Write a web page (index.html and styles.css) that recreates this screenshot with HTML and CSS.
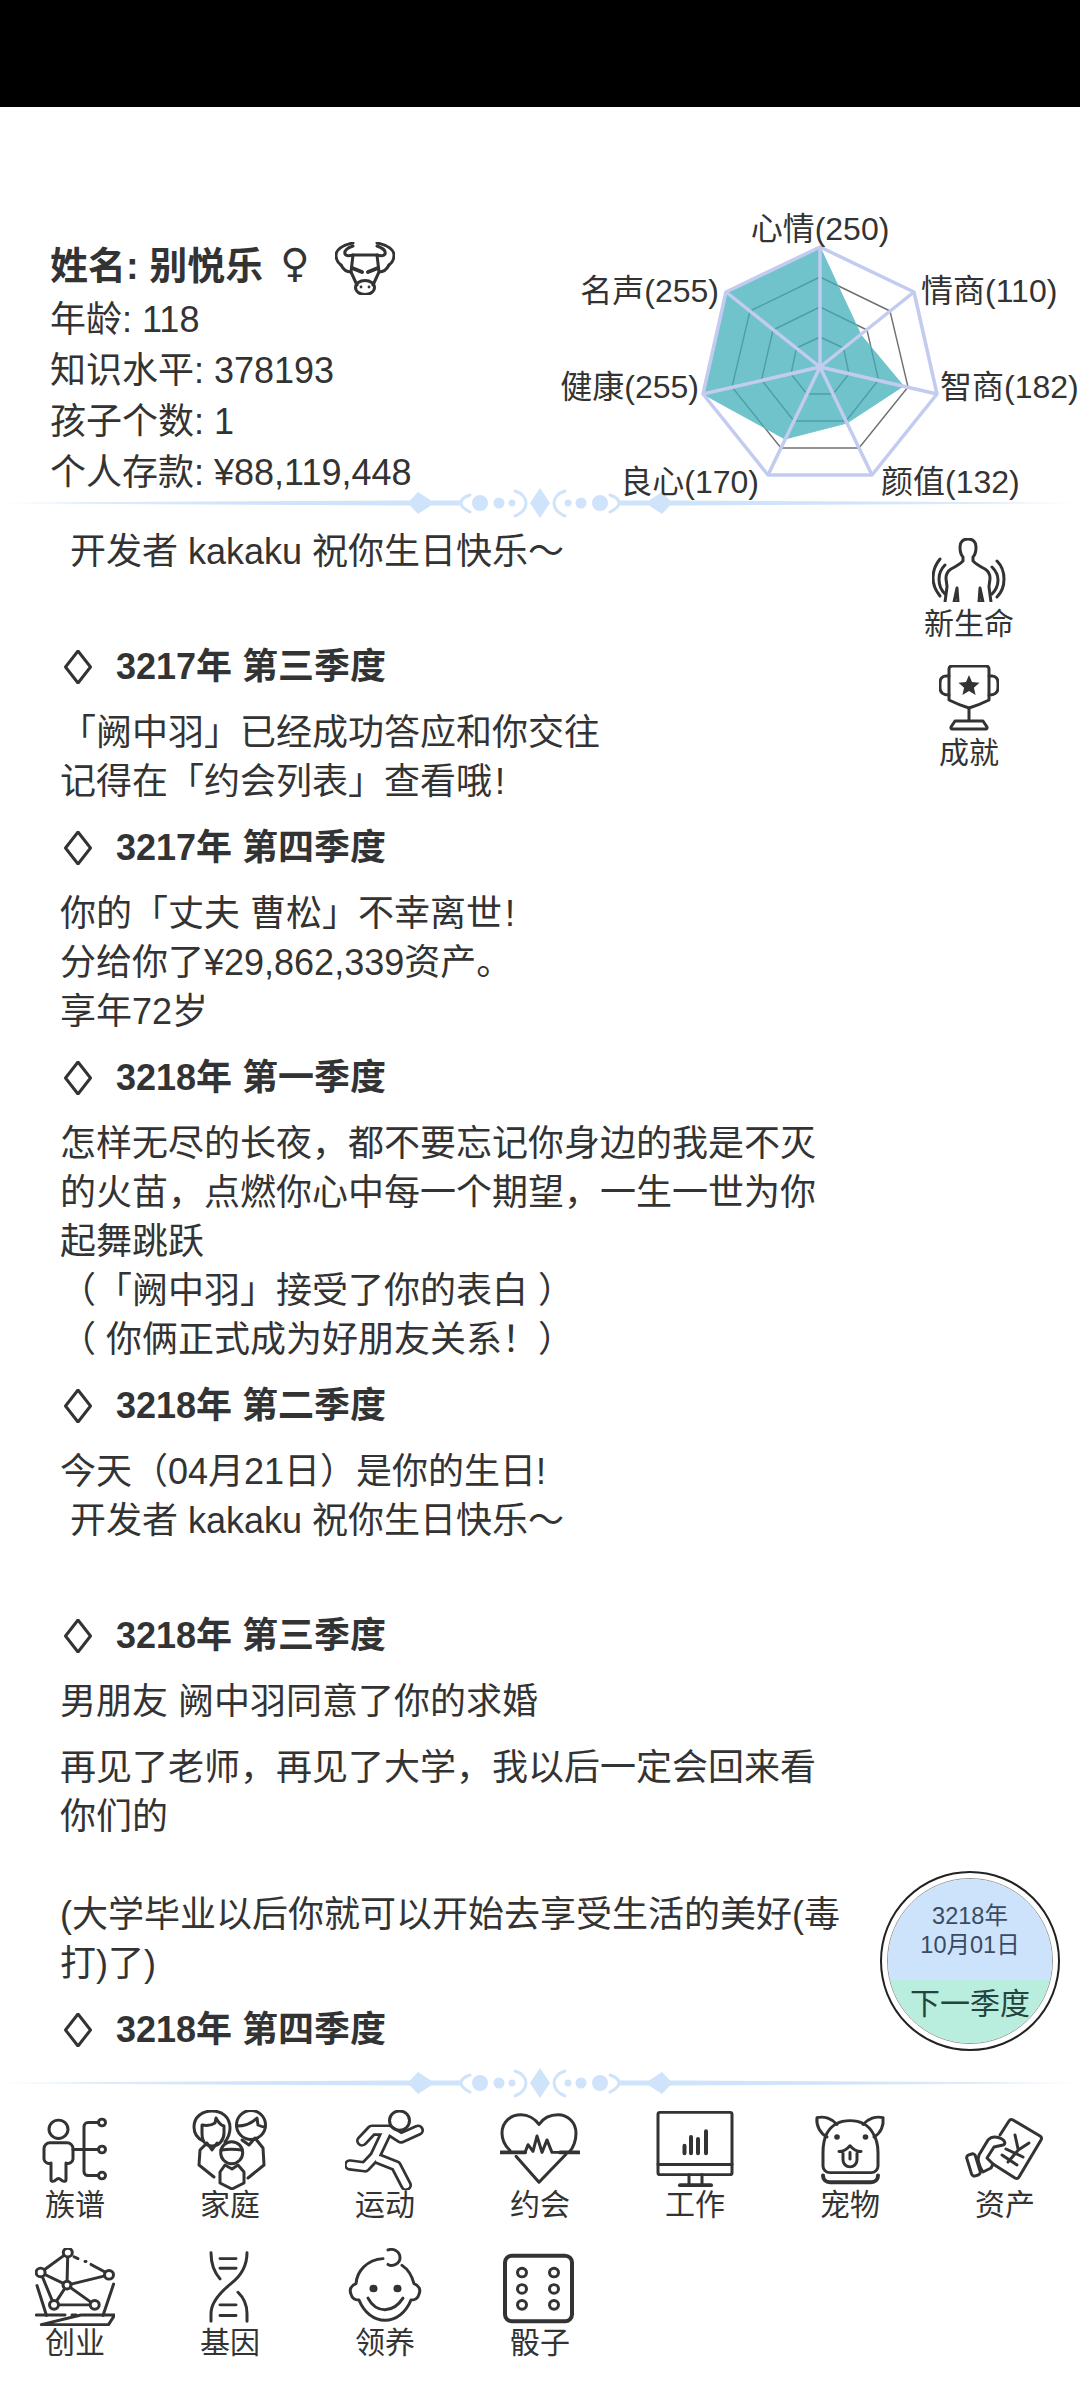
FILE: index.html
```html
<!DOCTYPE html>
<html lang="zh-CN">
<head>
    <meta charset="UTF-8">
    <meta name="viewport" content="width=device-width, initial-scale=1.0">
    <title>人生模拟器</title>
    <link rel="stylesheet" href="styles.css">
</head>
<body>

    <div class="status-bar"></div>

    <div class="header">
        <div class="info">
            <div class="info-name">
                <span>姓名: 别悦乐</span>
                <span class="gender">♀</span>
                <svg class="zodiac" viewBox="0 0 60 53">
                    <path d="M18 1C7 3 1 8 1 13c0 5 2 8 5 10M42 1c11 2 17 7 17 12 0 5-2 8-5 10"/>
                    <path d="M18 4c-6 2-9 5-8 8 1 2 4 2 8 1h24c4 1 7 1 8-1 1-3-2-6-8-8"/>
                    <path d="M6 23c2 4 5 7 10 7M54 23c-2 4-5 7-10 7"/>
                    <path d="M18 13l-2 17 6 13M42 13l2 17-6 13"/>
                    <path class="brow" d="M17 26l10 4M43 26l-10 4"/>
                    <ellipse cx="30" cy="45.500" rx="9.500" ry="7"/>
                    <circle class="solid" cx="26" cy="45" r="1.400"/>
                    <circle class="solid" cx="34" cy="45" r="1.400"/>
                </svg>
            </div>
            <div class="info-line">年龄: 118</div>
            <div class="info-line">知识水平: 378193</div>
            <div class="info-line">孩子个数: 1</div>
            <div class="info-line">个人存款: ¥88,119,448</div>
        </div>

        <svg class="radar" viewBox="540 190 540 310">
            <g class="radar-rings">
                <polygon points="820,337 843.500,348 849,374 833,394 807,394 791,374 796.500,348"/>
                <polygon points="820,307 867,330 878.500,380 846,421 794,421 761.500,380 773,330"/>
                <polygon points="820,277 890,311 908,387 859,448 781,448 732,387 750,311"/>
            </g>
            <polygon class="radar-data" points="820,247 861,335 903.500,386 847,423 785,439 703,394 726,292"/>
            <g class="radar-spokes">
                <line x1="820" y1="367" x2="820" y2="247"/>
                <line x1="820" y1="367" x2="914" y2="292"/>
                <line x1="820" y1="367" x2="937" y2="394"/>
                <line x1="820" y1="367" x2="872" y2="475"/>
                <line x1="820" y1="367" x2="768" y2="475"/>
                <line x1="820" y1="367" x2="703" y2="394"/>
                <line x1="820" y1="367" x2="726" y2="292"/>
            </g>
            <polygon class="radar-outer" points="820,247 914,292 937,394 872,475 768,475 703,394 726,292"/>
            <g class="radar-labels">
                <text x="820" y="240" text-anchor="middle">心情(250)</text>
                <text x="921" y="302">情商(110)</text>
                <text x="940" y="398">智商(182)</text>
                <text x="881" y="493">颜值(132)</text>
                <text x="759" y="493" text-anchor="end">良心(170)</text>
                <text x="699" y="398" text-anchor="end">健康(255)</text>
                <text x="719" y="302" text-anchor="end">名声(255)</text>
            </g>
        </svg>
    </div>

    <svg class="divider" viewBox="0 0 1080 32">
        <defs>
            <linearGradient id="fade" gradientUnits="userSpaceOnUse" x1="8" x2="400" y1="0" y2="0">
                <stop offset="0" stop-color="#cfe3fb" stop-opacity="0.1"/>
                <stop offset="0.2" stop-color="#cfe3fb" stop-opacity="0.65"/>
                <stop offset="0.6" stop-color="#cfe3fb"/>
            </linearGradient>
            <symbol id="dividerHalf" viewBox="0 0 540 32" width="540" height="32">
                <polygon points="8,15.500 400,13.500 400,18.500 8,16.500" fill="url(#fade)"/>
                <polygon points="400,13.500 410,13.500 418,5 431,13.500 460,13.500 460,18.500 431,18.500 418,27 410,18.500 400,18.500" fill="#cfe3fb"/>
                <path d="M470 8C464 10 461 13 461 16s3 6 9 9M515 4c7 2 11 7 11 12s-4 10-11 13" fill="none" stroke="#cfe3fb" stroke-width="3"/>
                <circle cx="480" cy="16" r="8" fill="#cfe3fb"/>
                <circle cx="499" cy="16" r="5.500" fill="#cfe3fb"/>
                <circle cx="512" cy="16" r="3.500" fill="#cfe3fb"/>
                <polygon points="530,16 540,1 540,31" fill="#cfe3fb"/>
            </symbol>
        </defs>
        <use href="#dividerHalf" x="0" y="0"/>
        <use href="#dividerHalf" transform="translate(1080 0) scale(-1 1)"/>
    </svg>

    <div class="main">
        <div class="log">
            <div class="log-inner">
                <p>今天（04月21日）是你的生日!<br>&nbsp;开发者 kakaku 祝你生日快乐～<br><br></p>

                <h3><svg class="bullet" viewBox="0 0 28 34"><path d="M14 1L26.500 17 14 33 1.500 17z"/></svg>3217年 第三季度</h3>
                <p>「阙中羽」已经成功答应和你交往<br>记得在「约会列表」查看哦&#8202;!</p>

                <h3><svg class="bullet" viewBox="0 0 28 34"><path d="M14 1L26.500 17 14 33 1.500 17z"/></svg>3217年 第四季度</h3>
                <p>你的「丈夫 曹松」不幸离世&#8202;!<br>分给你了¥29,862,339资产。<br>享年72岁</p>

                <h3><svg class="bullet" viewBox="0 0 28 34"><path d="M14 1L26.500 17 14 33 1.500 17z"/></svg>3218年 第一季度</h3>
                <p>怎样无尽的长夜，都不要忘记你身边的我是不灭的火苗，点燃你心中每一个期望，一生一世为你起舞跳跃<br>（「阙中羽」接受了你的表白 ）<br>（ 你俩正式成为好朋友关系！）</p>

                <h3><svg class="bullet" viewBox="0 0 28 34"><path d="M14 1L26.500 17 14 33 1.500 17z"/></svg>3218年 第二季度</h3>
                <p>今天（04月21日）是你的生日!<br>&nbsp;开发者 kakaku 祝你生日快乐～<br><br></p>

                <h3><svg class="bullet" viewBox="0 0 28 34"><path d="M14 1L26.500 17 14 33 1.500 17z"/></svg>3218年 第三季度</h3>
                <p>男朋友 阙中羽同意了你的求婚</p>
                <p>再见了老师，再见了大学，我以后一定会回来看你们的<br><br>(大学毕业以后你就可以开始去享受生活的美好(毒打)了)</p>

                <h3><svg class="bullet" viewBox="0 0 28 34"><path d="M14 1L26.500 17 14 33 1.500 17z"/></svg>3218年 第四季度</h3>
            </div>
        </div>

        <div class="side">
            <div class="side-item">
                <svg class="side-icon" width="74" height="64" viewBox="0 0 74 64">
                    <path d="M36 1c-5 0-8 3-8 8 0 4 1 8 3 10v4c-3 3-8 6-12 8-3 2-5 5-5 9 0 3 1 6 1 9l-2 15M36 1c5 0 8 3 8 8 0 4-1 8-3 10v4c3 3 8 6 12 8 3 2 5 5 5 9 0 3-1 6-1 9l2 15"/>
                    <path d="M25 50l-3 14h4zM48 50l3 14h-4z"/>
                    <path d="M8 21C3 27 1 33 1 40s3 13 7 18M13 27c-4 4-6 9-6 14s2 11 6 15M65 23c5 5 7 11 7 18s-2 13-7 18M60 29c4 4 6 8 6 13s-2 10-6 14"/>
                </svg>
                <span>新生命</span>
            </div>
            <div class="side-item side-trophy">
                <svg class="side-icon" width="60" height="66" viewBox="0 0 60 66">
                    <path d="M13 1h34a3 3 0 0 1 3 3v31c-6 3-13 6-20 8-7-2-14-5-20-8V4a3 3 0 0 1 3-3z"/>
                    <path d="M10 11H7c-4 0-6 3-6 7v5c0 4 3 7 9 7M50 11h3c4 0 6 3 6 7v5c0 4-3 7-9 7"/>
                    <path d="M30 43v13M16 56h28l4 6a1.500 1.500 0 0 1-1 2H13a1.500 1.500 0 0 1-1-2z"/>
                    <path class="solid" d="M30 10l3 7 7.500 .7-5.600 5 1.700 7.300L30 26l-6.600 4 1.700-7.300-5.600-5 7.500-.7z"/>
                </svg>
                <span>成就</span>
            </div>
        </div>

        <div class="next-btn">
            <div class="next-inner">
                <div class="next-date">3218年<br>10月01日</div>
                <div class="next-label">下一季度</div>
            </div>
        </div>
    </div>

    <svg class="divider" viewBox="0 0 1080 32">
        <use href="#dividerHalf" x="0" y="0"/>
        <use href="#dividerHalf" transform="translate(1080 0) scale(-1 1)"/>
    </svg>

    <div class="menu">
        <div class="menu-item">
            <svg viewBox="0 0 80 83" preserveAspectRatio="none">
                <circle cx="23.500" cy="20" r="9.500"/>
                <path d="M15 34H32a6 6 0 0 1 6 6v11a5 5 0 0 1-7 4v17a2 2 0 0 1-2 2c-3 0-3-3-5.500-3s-2.500 3-5.500 3a2 2 0 0 1-2-2V55a5 5 0 0 1-7-4V40a6 6 0 0 1 6-6z"/>
                <path d="M63 13H53a4 4 0 0 0-4 4V64a4 4 0 0 0 4 4H63M38 41H63"/>
                <circle cx="67" cy="13" r="3.500"/>
                <circle cx="67" cy="41" r="3.500"/>
                <circle cx="67" cy="68" r="3.500"/>
            </svg>
            <span>族谱</span>
        </div>
        <div class="menu-item">
            <svg viewBox="0 0 80 80">
                <path d="M13 31C7 28 4 23 4 17 4 7 12 1 22 1s18 6 18 17c0 6-2 10-5 14"/>
                <path d="M12 15c5 1 10 0 13-2l1-5c2 4 4 7 8 8v7c0 7-5 13-12 13S12 30 12 23z"/>
                <path d="M17 33l5 7 5-7M17 33l-7 7-1 15 15 12"/>
                <circle cx="61" cy="15" r="14.500"/>
                <path d="M47 16c7 0 14-2 20-8l1 7c2 1 4 2 7 2"/>
                <path d="M52 30l7 5 6-7 8 10 1 17-16 13"/>
                <circle cx="41.700" cy="42.700" r="11"/>
                <path d="M31 40c7-1 14-1 21 0"/>
                <path d="M35 55l-5 7v11l12 6 12-6V62l-6-7-6 4z"/>
            </svg>
            <span>家庭</span>
        </div>
        <div class="menu-item">
            <svg viewBox="0 0 80 83" preserveAspectRatio="none">
                <g class="outline-under">
                    <path d="M17 32L27 21H44L56 29 73 21"/>
                    <path d="M41 24L30 48 20 59 5 57"/>
                    <path d="M34 51L51 58 61 78"/>
                </g>
                <g class="outline-over">
                    <path d="M17 32L27 21H44L56 29 73 21"/>
                    <path d="M41 24L30 48 20 59 5 57"/>
                    <path d="M34 51L51 58 61 78"/>
                </g>
                <circle cx="54.500" cy="11" r="10"/>
            </svg>
            <span>运动</span>
        </div>
        <div class="menu-item">
            <svg viewBox="0 0 80 83" preserveAspectRatio="none">
                <path d="M10 42C4 36 2 30 2 24 2 12 11 5 21 5c7 0 14 4 18 10 4-6 11-10 19-10 10 0 18 8 18 19 0 7-2 14-7 20"/>
                <path d="M16 48L39 75 66 46"/>
                <path class="bold" d="M1 44H25"/>
                <path d="M25 44L28 36 33 43 37 27 42 44 47 31 52 44H60"/>
                <path class="bold" d="M60 44H79"/>
            </svg>
            <span>约会</span>
        </div>
        <div class="menu-item">
            <svg viewBox="0 0 80 83" preserveAspectRatio="none">
                <rect x="3" y="2.500" width="74" height="64.500" rx="2"/>
                <path d="M3 56.500H77M34 67V78M47 67V78"/>
                <path class="bold" d="M25 78H56"/>
                <path class="bold" d="M29.500 45V37M36 45V28M43 45V30M51 45V22"/>
            </svg>
            <span>工作</span>
        </div>
        <div class="menu-item">
            <svg viewBox="0 0 80 83" preserveAspectRatio="none">
                <path d="M17 24C22 15 30 11 40 11s18 4 23 13c3 5 5 12 5 20v14a7 7 0 0 1-7 7H20a7 7 0 0 1-7-7V44c0-8 1-14 4-20z"/>
                <path d="M17 28C10 24 6 16 7 8c7-2 15 1 20 7M64 28c7-4 10-12 9-20-7-2-15 1-20 7"/>
                <path class="bold" d="M13 68c0 4 3 7 7 7h41c4 0 7-3 7-7"/>
                <path d="M29 43c5 0 8-2 11-6 3 4 6 6 11 6M33 45v7a7 7 0 0 0 14 0v-7M40 44v7"/>
                <circle class="solid" cx="27" cy="28" r="2.800"/>
                <circle class="solid" cx="55.500" cy="28" r="2.800"/>
            </svg>
            <span>宠物</span>
        </div>
        <div class="menu-item">
            <svg viewBox="0 0 80 80">
                <path d="M35 25L44 11a3 3 0 0 1 4-1L75 26a3 3 0 0 1 1 4L54 67a3 3 0 0 1-4 1L28 54"/>
                <path d="M18 62C14 56 12 50 14 45L23 30c3-3 8-4 14-1 3 2 4 5 1 6l-9 2-7 11 6 6-2 4z"/>
                <rect x="4" y="44" width="9" height="22" rx="3" transform="rotate(-17 8.300 55)"/>
                <path d="M50 25l3.300 15L64 33M53.300 40L43 52M41 39l17 8M37 45l15 10"/>
            </svg>
            <span>资产</span>
        </div>
        <div class="menu-item">
            <svg viewBox="0 0 80 83" preserveAspectRatio="none">
                <path d="M32.800 4.700L5.600 25.400 32 38.500 32.800 4.700M32 38.500L74 27.800M32 38.500L19 59M32 38.500L59.700 59M19 59H59.700M5.600 25.400L19 59"/>
                <path d="M39 9L43 11M50 14h1M56 17L70 25"/>
                <circle class="white" cx="32.800" cy="4.700" r="4.500"/>
                <circle class="white" cx="74" cy="27.800" r="4.500"/>
                <circle class="white" cx="5.600" cy="25.400" r="4.500"/>
                <circle class="white" cx="32" cy="38.500" r="4"/>
                <circle class="white" cx="19" cy="59" r="4.500"/>
                <circle class="white" cx="59.700" cy="59" r="4.500"/>
                <path d="M2 39L11.500 70M78.600 37.400L68 70"/>
                <path d="M1.200 69.500H30M37 69.500H41M46 69.500H79.700L73.500 79.500H6.300Z"/>
            </svg>
            <span>创业</span>
        </div>
        <div class="menu-item">
            <svg viewBox="0 0 80 83" preserveAspectRatio="none">
                <path d="M21 5c0 12 3 20 9 27M57 5c0 14-6 24-16 32-12 10-20 20-20 31v8M57 76v-8c0-8-3-16-9-22"/>
                <path d="M30 11H46M30 21H46M30 59H46M30 70H46"/>
            </svg>
            <span>基因</span>
        </div>
        <div class="menu-item">
            <svg viewBox="0 0 80 83" preserveAspectRatio="none">
                <path d="M38 11C22 12 12 24 11 37 6 39 4 43 6 48c1 4 4 6 8 6 5 13 15 21 26 21s21-8 26-21c4 0 7-2 8-6 2-5 0-9-5-11-2-8-6-15-12-19"/>
                <path d="M43 2c6-2 12 2 12 8s-7 10-12 7"/>
                <path d="M23 52c4 8 10 12 17 12s13-4 18-12"/>
                <circle class="solid" cx="28.500" cy="42" r="4"/>
                <circle class="solid" cx="52.500" cy="42" r="4"/>
            </svg>
            <span>领养</span>
        </div>
        <div class="menu-item">
            <svg viewBox="0 0 80 83" preserveAspectRatio="none">
                <rect class="bold" x="5" y="8" width="67" height="68" rx="7"/>
                <circle cx="22" cy="25.500" r="4.500"/>
                <circle cx="22" cy="42.500" r="4.500"/>
                <circle cx="22" cy="59" r="4.500"/>
                <circle cx="54" cy="25.500" r="4.500"/>
                <circle cx="54" cy="42.500" r="4.500"/>
                <circle cx="54" cy="59" r="4.500"/>
            </svg>
            <span>骰子</span>
        </div>
    </div>

</body>
</html>
```

FILE: styles.css
```css
body {
    font-family: "Liberation Sans", "Noto Sans CJK SC", sans-serif;
    margin: 0;
    padding: 0;
    width: 1080px;
    height: 2400px;
    background-color: #FFFFFF;
    color: #333333;
    overflow: hidden;
    text-spacing-trim: space-all;
}

svg {
    display: block;
    fill: none;
    stroke: #333333;
    stroke-width: 3;
    stroke-linecap: round;
    stroke-linejoin: round;
}

.status-bar {
    height: 107px;
    background-color: #000000;
}

/* cabecalho */
.header {
    position: relative;
    height: 380px;
    box-sizing: border-box;
    padding: 124px 0 0 50px;
}

.info-name {
    display: flex;
    align-items: center;
    height: 63px;
    font-size: 38px;
    font-weight: bold;
}

.gender {
    font-family: "DejaVu Sans", sans-serif;
    font-weight: bold;
    font-size: 40px;
    margin-left: 17px;
}

.zodiac {
    align-self: flex-start;
    width: 60px;
    height: 53px;
    margin: 11px 0 0 25px;
    stroke-width: 3;
}

.zodiac .brow {
    stroke-width: 4;
}

.info-line {
    font-size: 36px;
    line-height: 51px;
}

.radar {
    position: absolute;
    left: 540px;
    top: 83px;
    width: 540px;
    height: 310px;
    overflow: visible;
}

.radar-rings polygon {
    stroke: #707070;
    stroke-width: 1.4;
}

.radar-data {
    fill: rgba(66, 175, 186, 0.75);
    stroke: #6fc4cc;
    stroke-width: 1;
}

.radar-spokes line {
    stroke: #c3cbf0;
    stroke-width: 3.5;
    stroke-linecap: butt;
}

.radar-outer {
    stroke: #c3cbf0;
    stroke-width: 3.5;
}

.radar-labels text {
    font-size: 32px;
    fill: #333333;
    stroke: none;
}

.divider {
    width: 1080px;
    height: 32px;
    stroke: none;
    stroke-width: 0;
}

/* registro de eventos */
.main {
    position: relative;
    display: flex;
    height: 1548px;
}

.log {
    width: 858px;
    box-sizing: border-box;
    padding: 0 14px 0 60px;
    overflow: hidden;
}

.log-inner {
    margin-top: -41px;
    font-size: 36px;
    line-height: 49px;
}

.log-inner p {
    margin: 0 0 17px;
}

.log-inner h3 {
    display: flex;
    align-items: center;
    margin: 0 0 17px;
    font-size: 36px;
    font-weight: bold;
}

.bullet {
    width: 28px;
    height: 34px;
    margin: 0 24px 0 4px;
}

.side {
    flex: 1;
    display: flex;
    flex-direction: column;
    align-items: center;
    padding-top: 19px;
    font-size: 30px;
    line-height: 36px;
}

.side-item {
    display: flex;
    flex-direction: column;
    align-items: center;
    gap: 4px;
}

.side-trophy {
    margin-top: 23px;
}

.solid {
    fill: #333333;
    stroke: none;
}

.next-btn {
    position: absolute;
    left: 880px;
    top: 1352px;
    width: 180px;
    height: 180px;
    box-sizing: border-box;
    padding: 5px;
    border: 2px solid #222222;
    border-radius: 50%;
    background-color: #FFFFFF;
}

.next-inner {
    display: flex;
    flex-direction: column;
    height: 100%;
    box-sizing: border-box;
    border: 1.5px solid #999999;
    border-radius: 50%;
    overflow: hidden;
    text-align: center;
}

.next-date {
    flex: 1;
    box-sizing: border-box;
    padding-top: 23px;
    background-color: #CCE3FB;
    color: #3A4A60;
    font-size: 23.5px;
    line-height: 29px;
}

.next-label {
    height: 63px;
    padding-top: 6px;
    box-sizing: border-box;
    background-color: #B9EEDE;
    color: #24433E;
    font-size: 30px;
    line-height: 36px;
}

/* menu inferior */
.menu {
    display: grid;
    grid-template-columns: repeat(7, 155px);
    justify-content: center;
    row-gap: 25px;
    padding-top: 11px;
    font-size: 30px;
    line-height: 36px;
}

.menu-item {
    display: flex;
    flex-direction: column;
    align-items: center;
}

.menu-item svg {
    width: 80px;
    height: 80px;
    margin-bottom: -3px;
}

.menu-item .bold {
    stroke-width: 4;
}

.menu-item .white {
    fill: #FFFFFF;
}

.outline-under path {
    stroke-width: 12;
}

.outline-over path {
    stroke: #FFFFFF;
    stroke-width: 6.5;
}
```
